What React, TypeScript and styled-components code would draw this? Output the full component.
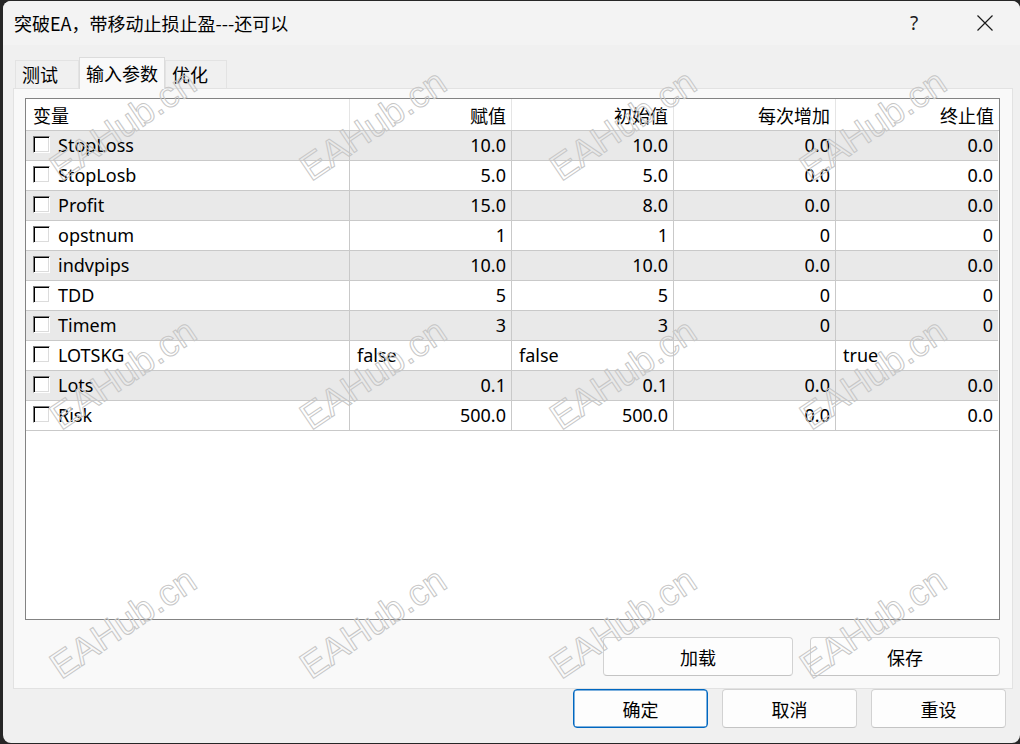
import React from "react";
import styled, { createGlobalStyle, css } from "styled-components";

const FONT = `"Noto Sans", "Noto Sans CJK SC", sans-serif`;

const GlobalStyle = createGlobalStyle`
  html, body {
    margin: 0;
    padding: 0;
  }
  body {
    background: #262626;
    font-family: ${FONT};
    color: #000;
  }
`;

type Row = { name: string; cells: string[]; text?: boolean };

const rows: Row[] = [
  { name: "StopLoss", cells: ["10.0", "10.0", "0.0", "0.0"] },
  { name: "StopLosb", cells: ["5.0", "5.0", "0.0", "0.0"] },
  { name: "Profit", cells: ["15.0", "8.0", "0.0", "0.0"] },
  { name: "opstnum", cells: ["1", "1", "0", "0"] },
  { name: "indvpips", cells: ["10.0", "10.0", "0.0", "0.0"] },
  { name: "TDD", cells: ["5", "5", "0", "0"] },
  { name: "Timem", cells: ["3", "3", "0", "0"] },
  { name: "LOTSKG", cells: ["false", "false", "", "true"], text: true },
  { name: "Lots", cells: ["0.1", "0.1", "0.0", "0.0"] },
  { name: "Risk", cells: ["500.0", "500.0", "0.0", "0.0"] },
];

const headers = ["赋值", "初始值", "每次增加", "终止值"];

export default function App() {
  const marks: { x: number; y: number }[] = [];
  for (let j = 0; j < 3; j++) {
    for (let i = 0; i < 4; i++) {
      marks.push({ x: 123 + i * 250, y: 125 + j * 249 });
    }
  }

  return (
    <>
      <GlobalStyle />
      <Desktop>
        <Window>
          <TitleBar>
            <Title>突破EA，带移动止损止盈---还可以</Title>
            <CaptionButton $w={70}>?</CaptionButton>
            <CaptionButton $w={71}>
              <svg width="16" height="16" viewBox="0 0 16 16">
                <path d="M0.5 0.5 L15.5 15.5 M15.5 0.5 L0.5 15.5" stroke="#1a1a1a" strokeWidth="1.2" fill="none" />
              </svg>
            </CaptionButton>
          </TitleBar>

          <Content>
            <TabStrip>
              <Tab>测试</Tab>
              <Tab $active>输入参数</Tab>
              <Tab $last>优化</Tab>
            </TabStrip>

            <Panel>
              <Table>
                <HeaderRow>
                  <HeadCell>变量</HeadCell>
                  {headers.map((h) => (
                    <HeadCell key={h} $right>
                      {h}
                    </HeadCell>
                  ))}
                </HeaderRow>
                {rows.map((r, idx) => (
                  <DataRow key={r.name} $shaded={idx % 2 === 0}>
                    <NameCell>
                      <CheckBox />
                      <span>{r.name}</span>
                    </NameCell>
                    {r.cells.map((c, k) => (
                      <Cell key={k} $left={r.text}>
                        {c}
                      </Cell>
                    ))}
                  </DataRow>
                ))}
              </Table>

              <ButtonRow $gap={17} $pad={0}>
                <Button $w={190}>加载</Button>
                <Button $w={190}>保存</Button>
              </ButtonRow>
            </Panel>

            <ButtonRow $gap={14} $pad={7}>
              <Button $w={135} $primary>
                确定
              </Button>
              <Button $w={135}>取消</Button>
              <Button $w={135}>重设</Button>
            </ButtonRow>
          </Content>
        </Window>

        <Watermarks width="1020" height="744" viewBox="0 0 1020 744">
          {marks.map((m, i) => (
            <text
              key={i}
              x={m.x}
              y={m.y}
              textAnchor="middle"
              dominantBaseline="central"
              transform={`rotate(-34 ${m.x} ${m.y})`}
            >
              EAHub.cn
            </text>
          ))}
        </Watermarks>
      </Desktop>
    </>
  );
}

const Desktop = styled.div`
  position: relative;
  width: 1020px;
  height: 744px;
  padding: 1px 0 0 3px;
  box-sizing: border-box;
  overflow: hidden;
`;

const Window = styled.div`
  width: 1017px;
  height: 742px;
  background: #f0f0f0;
  border-radius: 8px;
  overflow: hidden;
  display: flex;
  flex-direction: column;
`;

const TitleBar = styled.div`
  height: 44px;
  flex: none;
  display: flex;
  align-items: center;
  background: #f3f3f3;
`;

const Title = styled.div`
  flex: 1;
  padding-left: 11px;
  font-size: 18px;
  font-family: "Noto Sans CJK SC", "Noto Sans", sans-serif;
  line-height: 44px;
`;

const CaptionButton = styled.div<{ $w: number }>`
  width: ${(p) => p.$w}px;
  height: 44px;
  display: flex;
  align-items: center;
  justify-content: center;
  font-size: 19px;
  font-family: "Noto Sans", sans-serif;
  color: #1a1a1a;
`;

const Content = styled.div`
  flex: 1;
  display: flex;
  flex-direction: column;
  padding: 12px 7px 0 10px;
`;

const TabStrip = styled.div`
  height: 31px;
  display: flex;
  align-items: flex-end;
  padding-left: 2px;
`;

const Tab = styled.div<{ $active?: boolean; $last?: boolean }>`
  height: 28px;
  box-sizing: border-box;
  padding: 0 ${(p) => (p.$last ? "18px" : "20px")} 0 6px;
  border: 1px solid #e3e3e3;
  border-bottom: none;
  font-size: 18px;
  line-height: 26px;
  font-family: "Noto Sans CJK SC", sans-serif;
  background: #f0f0f0;
  ${(p) =>
    p.$active &&
    css`
      height: 32px;
      margin-bottom: -1px;
      padding: 0 6px;
      background: #f9f9f9;
      border-color: #dcdcdc;
      line-height: 30px;
      position: relative;
      z-index: 1;
    `}
`;

const Panel = styled.div`
  height: 601px;
  box-sizing: border-box;
  border: 1px solid #e2e2e2;
  background: #f9f9f9;
  padding: 9px 12px 12px 11px;
  display: flex;
  flex-direction: column;
`;

const Table = styled.div`
  height: 523px;
  box-sizing: border-box;
  border: 1px solid #838383;
  background: #fff;
  margin-bottom: 17px;
`;

const gridCols = css`
  display: grid;
  grid-template-columns: 324px 162px 162px 162px 1fr;
`;

const HeaderRow = styled.div`
  ${gridCols};
  height: 31px;
  border-bottom: 1px solid #c9c9c9;
`;

const HeadCell = styled.div<{ $right?: boolean }>`
  display: flex;
  align-items: center;
  justify-content: ${(p) => (p.$right ? "flex-end" : "flex-start")};
  padding: 0 ${(p) => (p.$right ? "5px" : "0")} 0 ${(p) => (p.$right ? "0" : "7px")};
  border-right: 1px solid #e5e5e5;
  font-size: 18px;
  font-family: "Noto Sans CJK SC", sans-serif;
  &:last-child {
    border-right: none;
  }
`;

const DataRow = styled.div<{ $shaded: boolean }>`
  ${gridCols};
  height: 30px;
  box-sizing: border-box;
  background: ${(p) => (p.$shaded ? "#e9e9e9" : "#fff")};
  border-bottom: 1px solid #c9c9c9;
  margin-right: 1px;
`;

const cellBase = css`
  display: flex;
  align-items: center;
  border-right: 1px solid #c9c9c9;
  font-size: 18px;
  white-space: nowrap;
  overflow: hidden;
  padding-bottom: 1px;
`;

const NameCell = styled.div`
  ${cellBase};
  padding-left: 7px;
  gap: 8px;
`;

const Cell = styled.div<{ $left?: boolean }>`
  ${cellBase};
  justify-content: ${(p) => (p.$left ? "flex-start" : "flex-end")};
  padding-left: ${(p) => (p.$left ? "7px" : "0")};
  padding-right: ${(p) => (p.$left ? "0" : "5px")};
  &:last-child {
    border-right: none;
  }
`;

const CheckBox = styled.span`
  display: block;
  width: 17px;
  height: 17px;
  min-width: 17px;
  box-sizing: border-box;
  background: #fff;
  border-top: 1px solid #7a7a7a;
  border-left: 1px solid #7a7a7a;
  border-right: 1px solid #ffffff;
  border-bottom: 1px solid #ffffff;
  box-shadow: inset 1px 1px 0 #000, inset -1px -1px 0 #dcdcdc;
  flex: none;
  margin-top: -2px;
`;

const ButtonRow = styled.div<{ $gap: number; $pad: number }>`
  display: flex;
  justify-content: flex-end;
  gap: ${(p) => p.$gap}px;
  padding-right: ${(p) => p.$pad}px;
`;

const Button = styled.div<{ $w: number; $primary?: boolean }>`
  width: ${(p) => p.$w}px;
  height: 39px;
  box-sizing: border-box;
  display: flex;
  align-items: center;
  justify-content: center;
  background: #fdfdfd;
  border: 1px solid #d2d2d2;
  border-bottom-color: #c4c4c4;
  border-radius: 4px;
  font-size: 18px;
  font-family: "Noto Sans CJK SC", sans-serif;
  ${(p) =>
    p.$primary &&
    css`
      border: 1px solid #0067c0;
      box-shadow: inset 0 0 0 0.5px #0067c0;
    `}
`;

const Watermarks = styled.svg`
  position: absolute;
  inset: 0;
  pointer-events: none;

  text {
    font-family: "Liberation Sans", Arial, sans-serif;
    font-size: 37px;
    fill: none;
    stroke: #c6c6c6;
    stroke-width: 1;
  }
`;
